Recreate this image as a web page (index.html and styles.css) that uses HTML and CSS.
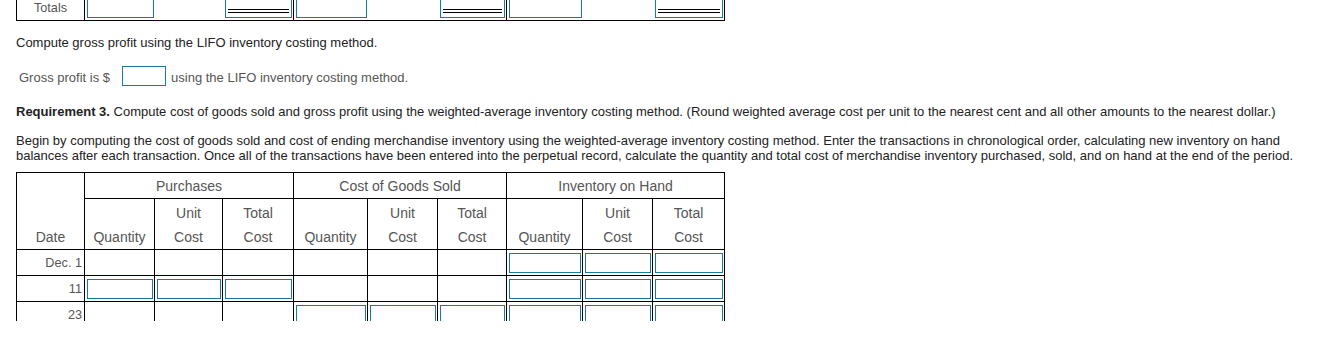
FILE: index.html
```html
<!DOCTYPE html>
<html lang="en">
<head>
<meta charset="utf-8">
<title>Inventory costing</title>
<link rel="stylesheet" href="styles.css">
</head>
<body>
<div class="page">
  <table class="grid totals">
    <colgroup>
      <col class="c-date"><col class="c1"><col class="c2"><col class="c3"><col class="c4"><col class="c5"><col class="c6"><col class="c7"><col class="c8"><col class="c9">
    </colgroup>
    <tr>
      <td class="label gs">Totals</td>
      <td class="in gs"><input class="field" type="text"></td>
      <td></td>
      <td class="in"><div class="field dbl"><div class="dbl-line"></div></div></td>
      <td class="in gs"><input class="field" type="text"></td>
      <td></td>
      <td class="in"><div class="field dbl"><div class="dbl-line"></div></div></td>
      <td class="in gs"><input class="field" type="text"></td>
      <td></td>
      <td class="in ge"><div class="field dbl"><div class="dbl-line"></div></div></td>
    </tr>
  </table>

  <p class="text first">Compute gross profit using the LIFO inventory costing method.</p>

  <div class="answer">
    <span class="answer-text">Gross profit is $</span>
    <input class="field small" type="text">
    <span class="answer-text">using the LIFO inventory costing method.</span>
  </div>

  <p class="text req"><b>Requirement 3.</b> Compute cost of goods sold and gross profit using the weighted-average inventory costing method. (Round weighted average cost per unit to the nearest cent and all other amounts to the nearest dollar.)</p>

  <p class="text para">Begin by computing the cost of goods sold and cost of ending merchandise inventory using the weighted-average inventory costing method. Enter the transactions in chronological order, calculating new inventory on hand balances after each transaction. Once all of the transactions have been entered into the perpetual record, calculate the quantity and total cost of merchandise inventory purchased, sold, and on hand at the end of the period.</p>

  <table class="grid record">
    <colgroup>
      <col class="c-date"><col class="c1"><col class="c2"><col class="c3"><col class="c4"><col class="c5"><col class="c6"><col class="c7"><col class="c8"><col class="c9">
    </colgroup>
    <thead>
      <tr class="h1">
        <th rowspan="2" class="date-h">Date</th>
        <th colspan="3">Purchases</th>
        <th colspan="3">Cost of Goods Sold</th>
        <th colspan="3">Inventory on Hand</th>
      </tr>
      <tr class="h2">
        <th>Quantity</th><th>Unit<br>Cost</th><th>Total<br>Cost</th>
        <th>Quantity</th><th>Unit<br>Cost</th><th>Total<br>Cost</th>
        <th>Quantity</th><th>Unit<br>Cost</th><th>Total<br>Cost</th>
      </tr>
    </thead>
    <tbody>
      <tr>
        <td class="date">Dec. 1</td>
        <td></td><td></td><td></td>
        <td></td><td></td><td></td>
        <td class="in"><input class="field" type="text"></td>
        <td class="in"><input class="field" type="text"></td>
        <td class="in"><input class="field" type="text"></td>
      </tr>
      <tr>
        <td class="date">11</td>
        <td class="in"><input class="field" type="text"></td>
        <td class="in"><input class="field" type="text"></td>
        <td class="in"><input class="field" type="text"></td>
        <td></td><td></td><td></td>
        <td class="in"><input class="field" type="text"></td>
        <td class="in"><input class="field" type="text"></td>
        <td class="in"><input class="field" type="text"></td>
      </tr>
      <tr>
        <td class="date">23</td>
        <td></td><td></td><td></td>
        <td class="in"><input class="field" type="text"></td>
        <td class="in"><input class="field" type="text"></td>
        <td class="in"><input class="field" type="text"></td>
        <td class="in"><input class="field" type="text"></td>
        <td class="in"><input class="field" type="text"></td>
        <td class="in"><input class="field" type="text"></td>
      </tr>
    </tbody>
  </table>
</div>
</body>
</html>
```

FILE: styles.css
```css
* {
  box-sizing: border-box;
}

body {
  margin: 0;
  background: #fff;
  color: #222;
  font-family: "Liberation Sans", Arial, sans-serif;
  font-size: 13px;
}

.page {
  height: 321px;
  overflow: hidden;
  padding: 0 16px;
}

/* ---------- grids ---------- */
.grid {
  border-collapse: collapse;
  table-layout: fixed;
  width: 708px;
}

.c-date { width: 68px; }
.c1 { width: 70px; }
.c2 { width: 68px; }
.c3 { width: 71px; }
.c4 { width: 74px; }
.c5 { width: 70px; }
.c6 { width: 69px; }
.c7 { width: 76px; }
.c8 { width: 70px; }
.c9 { width: 72px; }

.grid td,
.grid th {
  padding: 2px 0 0;
  line-height: 23px;
  color: #555;
  font-size: 12.7px;
  font-weight: normal;
}

.field {
  display: block;
  width: 100%;
  height: 20px;
  margin: 0;
  padding: 0 2px;
  border: 1px solid #157c9b;
  background: #fff;
  font: inherit;
}

.grid td.in {
  padding: 3px 1px 2px 2px;
}

/* totals strip (partially scrolled off the top) */
.totals {
  margin-top: -6px;
}

.totals td {
  border-top: 1px solid #000;
  border-bottom: 1px solid #000;
}

.totals td.gs {
  border-left: 1px solid #000;
}

.totals td.ge {
  border-right: 1px solid #000;
}

.totals .label {
  text-align: center;
}

.dbl {
  padding: 0 2px 4px;
}

.dbl-line {
  height: 100%;
  border-bottom: 4px double #000;
}

/* ---------- text ---------- */
.text {
  margin: 0;
  line-height: 15px;
}

.first {
  margin-top: 14px;
}

.answer {
  display: flex;
  align-items: flex-end;
  height: 20px;
  margin-top: 16px;
  padding-left: 3px;
  color: #555;
}

.answer-text {
  line-height: 17px;
}

.field.small {
  align-self: flex-start;
  width: 44px;
  margin: 0 5px 0 12px;
}

.req {
  margin-top: 18px;
}

.para {
  margin-top: 14px;
}

/* ---------- perpetual record ---------- */
.record {
  margin-top: 9px;
}

.record th,
.record td {
  border: 1px solid #000;
}

.record th {
  font-size: 14px;
  text-align: center;
  vertical-align: bottom;
}

.record .h1 th {
  line-height: 23px;
}

.record .h2 th {
  line-height: 24px;
}

.record td.date {
  text-align: right;
  padding-right: 2px;
}
```
